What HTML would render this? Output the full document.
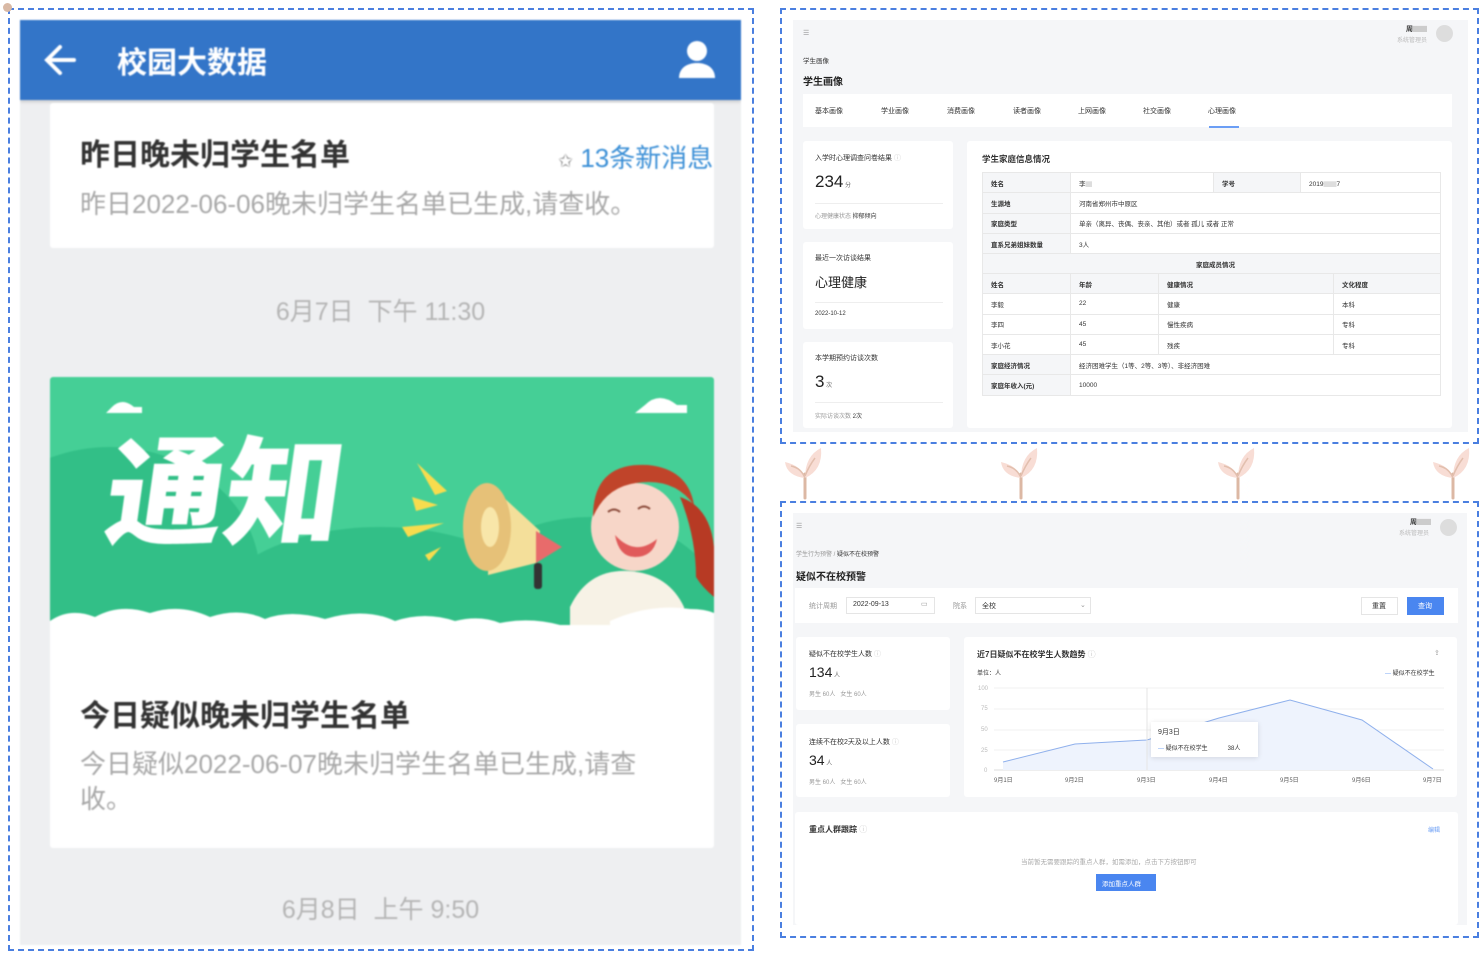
<!DOCTYPE html>
<html><head><meta charset="utf-8"><style>
*{margin:0;padding:0;box-sizing:border-box}
body{width:1483px;height:958px;background:#fff;position:relative;overflow:hidden;font-family:"Liberation Sans","Noto Sans CJK SC",sans-serif}
.a{position:absolute}
.dash{position:absolute;border:2px dashed #4a7fe0}
.blur{filter:blur(0.7px)}
.t7{font-size:7px;color:#333;white-space:nowrap}
.g{color:#999}
.card{position:absolute;background:#fff;border-radius:3px}
table{border-collapse:collapse;position:absolute;font-size:6.5px;color:#333}
td{border:1px solid #e8e8e8;height:20.3px;padding-left:8px;white-space:nowrap}
td.h{background:#f5f6f8;font-weight:bold}
</style></head><body>

<!-- LEFT PHONE -->
<div class="dash" style="left:8px;top:8px;width:746px;height:943px"></div>
<div class="a" style="left:3px;top:3px;width:9px;height:9px;border-radius:50%;background:#d9b9a5"></div>
<div class="a blur" style="left:20px;top:20px;width:721px;height:925px;background:#eeeff1;overflow:hidden">
  <div class="a" style="left:0;top:0;width:721px;height:80px;background:#3375c8;box-shadow:0 2px 3px rgba(0,0,0,.15)"></div>
  <svg class="a" style="left:22px;top:22px" width="36" height="36" viewBox="0 0 36 36"><path d="M32 18H6M18 5L5 18l13 13" stroke="#fff" stroke-width="4" fill="none" stroke-linecap="round"/></svg>
  <div class="a" style="left:97px;top:18px;font-size:30px;font-weight:bold;color:#fff">校园大数据</div>
  <svg class="a" style="left:656px;top:18px" width="42" height="42" viewBox="0 0 42 42"><circle cx="21" cy="13" r="10" fill="#fff"/><path d="M3 40c0-10 8-15 18-15s18 5 18 15z" fill="#fff"/></svg>

  <div class="card" style="left:30px;top:83px;width:664px;height:145px"></div>
  <div class="a" style="left:60px;top:110px;font-size:30px;font-weight:bold;color:#333">昨日晚未归学生名单</div>
  <div class="a" style="left:538px;top:118px;font-size:26px;color:#3b8fd6"><span style="font-size:18px;color:#888">✩</span> 13条新消息</div>
  <div class="a" style="left:60px;top:164px;font-size:26px;color:#a8a8a8">昨日2022-06-06晚未归学生名单已生成,请查收。</div>
  <div class="a" style="left:0;width:721px;top:272px;text-align:center;font-size:25px;color:#b5b5b5">6月7日&nbsp; 下午 11:30</div>

  <div class="card" style="left:30px;top:357px;width:664px;height:471px;overflow:hidden">
    <svg class="a" style="left:0;top:0" width="664" height="260" viewBox="0 0 664 260">
      <rect width="664" height="260" fill="#45cf96"/>
      <ellipse cx="60" cy="200" rx="150" ry="130" fill="#32bf87"/>
      <ellipse cx="330" cy="240" rx="170" ry="90" fill="#32bf87"/>
      <ellipse cx="540" cy="230" rx="130" ry="90" fill="#32bf87"/>
      <path d="M62 30q10-10 22 0h8v6H56z" fill="#fff"/>
      <path d="M595 28q14-14 32 0h10v8h-52z" fill="#fff"/>
      <text x="56" y="158" font-size="118" font-weight="900" fill="#fff" transform="skewX(-8) translate(18 0)" font-family="Noto Sans CJK SC, sans-serif">通知</text>
      <path d="M367 86l30 28-12 4z M362 120l26 8-22 6z M352 150l42 -4-36 14z M375 178l16-8-12 14z" fill="#f7dc4e"/>
      <path d="M440 108l50 46-4 32-48 12z" fill="#f4df9a"/>
      <ellipse cx="437" cy="150" rx="24" ry="44" fill="#e6c178"/>
      <ellipse cx="440" cy="150" rx="9" ry="20" fill="#f8e6a9"/>
      <path d="M486 154l26 16-26 16z" fill="#e86b6b"/>
      <rect x="484" y="186" width="8" height="26" rx="3" fill="#333"/>
      <path d="M520 230q18-38 58-36q40 2 56 36v30h-114z" fill="#f7f2e6"/>
      <circle cx="585" cy="150" r="44" fill="#f7d6c8"/>
      <path d="M543 140q0-55 55-52q40 4 46 40q-20-28-58-22q-30 4-43 34z" fill="#c0442a"/>
      <path d="M630 120q30 10 34 50v50q-12-10-18-20q0-40-16-80z" fill="#b73a24"/>
      <path d="M565 158q20 22 42 4q-4 18-22 18q-16 0-20-22z" fill="#e05a5a"/>
      <path d="M558 135q6-5 12 0M588 132q6-5 12 0" stroke="#8a4a3a" stroke-width="2" fill="none"/>
      <path d="M0 260V244Q20 230 45 240Q70 226 100 236Q130 226 160 240Q190 230 215 242Q240 232 275 242Q315 230 345 244Q375 234 405 244Q430 238 450 246Q480 240 510 248H664V260z" fill="#fff"/>
      <path d="M560 260v-16Q600 226 640 232Q655 232 664 236V260z" fill="#fff"/>
    </svg>
    <div class="a" style="left:30px;top:314px;font-size:30px;font-weight:bold;color:#333">今日疑似晚未归学生名单</div>
    <div class="a" style="left:30px;top:370px;width:600px;font-size:26px;line-height:35px;color:#a8a8a8">今日疑似2022-06-07晚未归学生名单已生成,请查收。</div>
  </div>
  <div class="a" style="left:0;width:721px;top:870px;text-align:center;font-size:25px;color:#b5b5b5">6月8日&nbsp; 上午 9:50</div>
</div>

<!-- RIGHT TOP -->
<div class="dash" style="left:780px;top:8px;width:699px;height:436px"></div>
<div class="a" style="left:793px;top:20px;width:675px;height:412px;background:#f5f6f8"></div>
<div class="a t7 g" style="left:803px;top:29px">☰</div>
<div class="a t7" style="left:1406px;top:24px;font-weight:bold">周<span style="color:#ccc">▇▇</span></div>
<div class="a t7" style="left:1397px;top:35px;color:#bbb;font-size:6px">系统管理员</div>
<div class="a" style="left:1436px;top:25px;width:17px;height:17px;border-radius:50%;background:#ddd"></div>
<div class="a t7" style="left:803px;top:55px;font-size:6.5px">学生画像</div>
<div class="a" style="left:803px;top:73px;font-size:10px;font-weight:bold;color:#222">学生画像</div>
<div class="a" style="left:803px;top:94px;width:649px;height:33px;background:#fff"></div>
<div class="a t7" style="left:815px;top:106px">基本画像</div>
<div class="a t7" style="left:881px;top:106px">学业画像</div>
<div class="a t7" style="left:947px;top:106px">消费画像</div>
<div class="a t7" style="left:1013px;top:106px">读者画像</div>
<div class="a t7" style="left:1078px;top:106px">上网画像</div>
<div class="a t7" style="left:1143px;top:106px">社交画像</div>
<div class="a t7" style="left:1208px;top:106px">心理画像</div>
<div class="a" style="left:1209px;top:126px;width:30px;height:1.5px;background:#6b9ef5"></div>

<div class="card" style="left:803px;top:141px;width:150px;height:88px"></div>
<div class="a t7" style="left:815px;top:153px">入学时心理调查问卷结果 <span style="color:#ccc">ⓘ</span></div>
<div class="a" style="left:815px;top:172px;font-size:17px;color:#222">234<span style="font-size:6px;color:#666"> 分</span></div>
<div class="a" style="left:815px;top:203px;width:128px;height:1px;background:#eee"></div>
<div class="a t7" style="left:815px;top:211px;font-size:6px"><span class="g">心理健康状态</span> 抑郁倾向</div>
<div class="card" style="left:803px;top:242px;width:150px;height:87px"></div>
<div class="a t7" style="left:815px;top:253px">最近一次访谈结果</div>
<div class="a" style="left:815px;top:272px;font-size:13px;color:#222">心理健康</div>
<div class="a" style="left:815px;top:302px;width:128px;height:1px;background:#eee"></div>
<div class="a t7" style="left:815px;top:311px;font-size:6px">2022-10-12</div>
<div class="card" style="left:803px;top:342px;width:150px;height:86px"></div>
<div class="a t7" style="left:815px;top:353px">本学期预约访谈次数</div>
<div class="a" style="left:815px;top:372px;font-size:17px;color:#222">3<span style="font-size:6px;color:#666"> 次</span></div>
<div class="a" style="left:815px;top:402px;width:128px;height:1px;background:#eee"></div>
<div class="a t7" style="left:815px;top:411px;font-size:6px"><span class="g">实际访谈次数</span> 2次</div>

<div class="card" style="left:967px;top:141px;width:485px;height:287px"></div>
<div class="a" style="left:982px;top:153px;font-size:8.5px;font-weight:bold;color:#333">学生家庭信息情况</div>
<table style="left:982px;top:172px;width:459px">
<tr><td class="h" style="width:88px">姓名</td><td style="width:143px">李<span style="color:#ddd">▇</span></td><td class="h" style="width:87px">学号</td><td>2019<span style="color:#ddd">▇▇</span>7</td></tr>
<tr><td class="h">生源地</td><td colspan="3">河南省郑州市中原区</td></tr>
<tr><td class="h">家庭类型</td><td colspan="3">单亲（离异、丧偶、丧亲、其他）或者 孤儿 或者 正常</td></tr>
<tr><td class="h">直系兄弟姐妹数量</td><td colspan="3">3人</td></tr>
<tr><td class="h" colspan="4" style="text-align:center">家庭成员情况</td></tr>
</table>
<table style="left:982px;top:273px;width:459px">
<tr><td class="h" style="width:88px">姓名</td><td class="h" style="width:88px">年龄</td><td class="h" style="width:175px">健康情况</td><td class="h">文化程度</td></tr>
<tr><td>李毅</td><td>22</td><td>健康</td><td>本科</td></tr>
<tr><td>李四</td><td>45</td><td>慢性疾病</td><td>专科</td></tr>
<tr><td>李小花</td><td>45</td><td>残疾</td><td>专科</td></tr>
<tr><td class="h">家庭经济情况</td><td colspan="3">经济困难学生（1等、2等、3等）、非经济困难</td></tr>
<tr><td class="h">家庭年收入(元)</td><td colspan="3">10000</td></tr>
</table>

<!-- sprouts -->
<svg class="a" style="left:770px;top:444px" width="713" height="58" viewBox="0 0 713 58">
<defs><g id="sp"><path d="M27 54V30" stroke="#dcb8a4" stroke-width="3" stroke-linecap="round" fill="none"/><path d="M27 34q-3-12-20-16q2 14 20 16z" fill="#f8ddd5"/><path d="M27 34q0-22 16-30q2 22-16 30z" fill="#f8ddd5"/><path d="M27 34q-4-10-14-12M27 32q4-10 10-18" stroke="#e2bfae" stroke-width="1.5" fill="none"/></g></defs>
<use href="#sp" x="8"/><use href="#sp" x="224"/><use href="#sp" x="441"/><use href="#sp" x="656"/>
</svg>

<!-- RIGHT BOTTOM -->
<div class="dash" style="left:780px;top:501px;width:699px;height:437px"></div>
<div class="a" style="left:793px;top:513px;width:674px;height:412px;background:#f5f6f8"></div>
<div class="a t7 g" style="left:796px;top:522px">☰</div>
<div class="a t7" style="left:1410px;top:517px;font-weight:bold">周<span style="color:#ccc">▇▇</span></div>
<div class="a t7" style="left:1399px;top:528px;color:#bbb;font-size:6px">系统管理员</div>
<div class="a" style="left:1440px;top:519px;width:17px;height:17px;border-radius:50%;background:#ddd"></div>
<div class="a t7" style="left:796px;top:549px;font-size:6px"><span class="g">学生行为预警 / </span>疑似不在校预警</div>
<div class="a" style="left:796px;top:568px;font-size:10px;font-weight:bold;color:#222">疑似不在校预警</div>
<div class="a" style="left:795px;top:588px;width:663px;height:35px;background:#fff"></div>
<div class="a t7 g" style="left:809px;top:601px">统计周期</div>
<div class="a" style="left:846px;top:597px;width:89px;height:17px;border:1px solid #e5e5e5"></div>
<div class="a t7" style="left:853px;top:601px">2022-09-13</div>
<div class="a t7 g" style="left:921px;top:600px">▭</div>
<div class="a t7 g" style="left:953px;top:601px">院系</div>
<div class="a" style="left:975px;top:597px;width:116px;height:17px;border:1px solid #e5e5e5"></div>
<div class="a t7" style="left:982px;top:601px">全校</div>
<div class="a t7 g" style="left:1080px;top:601px">⌄</div>
<div class="a" style="left:1361px;top:597px;width:37px;height:18px;border:1px solid #e5e5e5;background:#fff"></div>
<div class="a t7" style="left:1372px;top:601px">重置</div>
<div class="a" style="left:1407px;top:597px;width:37px;height:18px;background:#4a86f0"></div>
<div class="a t7" style="left:1418px;top:601px;color:#fff">查询</div>

<div class="card" style="left:796px;top:637px;width:154px;height:73px"></div>
<div class="a t7" style="left:809px;top:649px">疑似不在校学生人数 <span style="color:#ccc">ⓘ</span></div>
<div class="a" style="left:809px;top:664px;font-size:14px;color:#222">134<span style="font-size:6px;color:#666"> 人</span></div>
<div class="a t7 g" style="left:809px;top:689px;font-size:6px">男生 60人 &nbsp; 女生 60人</div>
<div class="card" style="left:796px;top:724px;width:154px;height:73px"></div>
<div class="a t7" style="left:809px;top:737px">连续不在校2天及以上人数 <span style="color:#ccc">ⓘ</span></div>
<div class="a" style="left:809px;top:752px;font-size:14px;color:#222">34<span style="font-size:6px;color:#666"> 人</span></div>
<div class="a t7 g" style="left:809px;top:777px;font-size:6px">男生 60人 &nbsp; 女生 60人</div>

<div class="card" style="left:964px;top:637px;width:493px;height:160px"></div>
<div class="a" style="left:977px;top:649px;font-size:8px;font-weight:bold;color:#333">近7日疑似不在校学生人数趋势 <span style="color:#ccc;font-weight:normal">ⓘ</span></div>
<div class="a t7 g" style="left:1434px;top:649px">⇪</div>
<div class="a t7" style="left:977px;top:668px;font-size:6px">单位：人</div>
<div class="a t7" style="left:1385px;top:668px;font-size:6px"><span style="color:#6b9ef5">—</span> 疑似不在校学生</div>
<svg class="a" style="left:964px;top:680px" width="493" height="110" viewBox="0 0 493 110">
<g font-size="6" fill="#bbb" font-family="Liberation Sans"><text x="14" y="10">100</text><text x="17" y="30">75</text><text x="17" y="51">50</text><text x="17" y="72">25</text><text x="20" y="92">0</text></g>
<g stroke="#f0f0f0"><path d="M30 8H480M30 29H480M30 50H480M30 70H480"/></g><path d="M30 90H480" stroke="#ddd"/>
<path d="M39 82L111 64L183 60L255 38L326 20L398 40L469 89V90H39z" fill="#eef3fd"/>
<path d="M39 82L111 64L183 60L255 38L326 20L398 40L469 89" stroke="#8fb0ec" fill="none"/>
<path d="M183 8V90" stroke="#e5e5e5"/>
<g font-size="6" fill="#555" font-family="Noto Sans CJK SC"><text x="30" y="102">9月1日</text><text x="101" y="102">9月2日</text><text x="173" y="102">9月3日</text><text x="245" y="102">9月4日</text><text x="316" y="102">9月5日</text><text x="388" y="102">9月6日</text><text x="459" y="102">9月7日</text></g>
</svg>
<div class="a" style="left:1151px;top:722px;width:107px;height:35px;background:#fff;box-shadow:0 1px 5px rgba(0,0,0,.12)"></div>
<div class="a t7" style="left:1158px;top:727px;font-size:7px">9月3日</div>
<div class="a t7" style="left:1158px;top:743px;font-size:6px"><span style="color:#6b9ef5">—</span> 疑似不在校学生<span style="margin-left:20px">38人</span></div>

<div class="card" style="left:795px;top:812px;width:663px;height:113px"></div>
<div class="a" style="left:809px;top:824px;font-size:8px;font-weight:bold;color:#333">重点人群跟踪 <span style="color:#ccc;font-weight:normal">ⓘ</span></div>
<div class="a t7" style="left:1428px;top:825px;color:#6b9ef5;font-size:6px">编辑</div>
<div class="a t7 g" style="left:1021px;top:856px;font-size:6.5px;color:#aaa">当前暂无需要跟踪的重点人群，如需添加，点击下方按钮即可</div>
<div class="a" style="left:1096px;top:874px;width:60px;height:17px;background:#4a86f0"></div>
<div class="a t7" style="left:1102px;top:878px;color:#fff;font-size:6.5px">添加重点人群</div>
</body></html>
